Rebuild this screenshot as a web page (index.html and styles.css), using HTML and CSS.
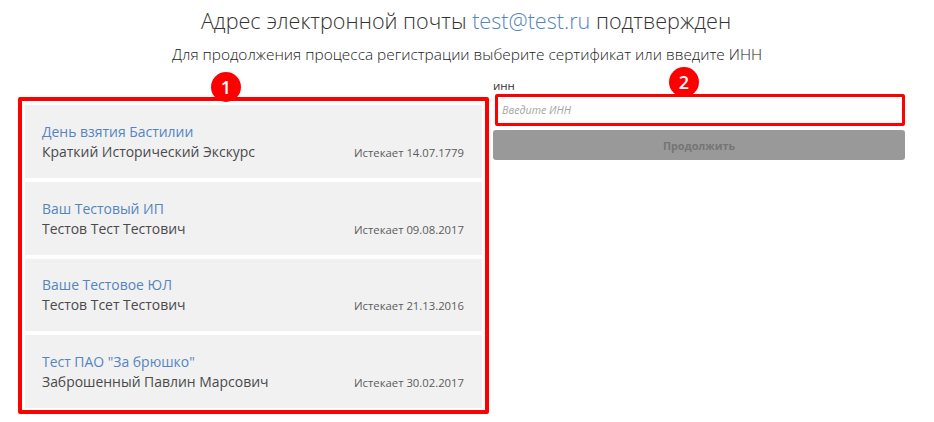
FILE: index.html
```html
<!DOCTYPE html>
<html lang="ru">

<head>
    <meta charset="UTF-8">
    <meta name="viewport" content="width=device-width, initial-scale=1.0">
    <title>Регистрация</title>
    <link rel="stylesheet" href="styles.css">
</head>

<body>
    <h1 class="title">Адрес электронной почты <a href="javascript:;" class="title_mail">test@test.ru</a> подтвержден</h1>
    <p class="subtitle">Для продолжения процесса регистрации выберите сертификат или введите ИНН</p>
    <div class="content">
        <div class="cert_box">
            <span class="badge badge_one">1</span>
            <div class="cert">
                <div class="cert_info">
                    <a href="javascript:;" class="cert_name">День взятия Бастилии</a>
                    <div class="cert_owner">Краткий Исторический Экскурс</div>
                </div>
                <div class="cert_date">Истекает 14.07.1779</div>
            </div>
            <div class="cert">
                <div class="cert_info">
                    <a href="javascript:;" class="cert_name">Ваш Тестовый ИП</a>
                    <div class="cert_owner">Тестов Тест Тестович</div>
                </div>
                <div class="cert_date">Истекает 09.08.2017</div>
            </div>
            <div class="cert">
                <div class="cert_info">
                    <a href="javascript:;" class="cert_name">Ваше Тестовое ЮЛ</a>
                    <div class="cert_owner">Тестов Тсет Тестович</div>
                </div>
                <div class="cert_date">Истекает 21.13.2016</div>
            </div>
            <div class="cert">
                <div class="cert_info">
                    <a href="javascript:;" class="cert_name">Тест ПАО "За брюшко"</a>
                    <div class="cert_owner">Заброшенный Павлин Марсович</div>
                </div>
                <div class="cert_date">Истекает 30.02.2017</div>
            </div>
        </div>
        <div class="inn_form">
            <span class="badge badge_two">2</span>
            <label for="inn" class="inn_label">инн</label>
            <input type="text" name="inn" id="inn" class="inn_input" placeholder="Введите ИНН">
            <button class="submit_btn">Продолжить</button>
        </div>
    </div>
</body>

</html>
```

FILE: styles.css
```css
* {
    margin: 0;
    padding: 0;
    box-sizing: border-box;
}

body {
    background-color: #fff;
    font-family: "Open Sans", "Noto Sans", sans-serif;
    color: #333;
}

a {
    text-decoration: none;
    color: #5585bd;
}

.title {
    height: 42px;
    padding-top: 6px;
    padding-right: 2px;
    font-size: 21.6px;
    line-height: 30px;
    font-weight: 300;
    text-align: center;
}

.subtitle {
    height: 34px;
    padding-top: 3px;
    font-size: 15.4px;
    line-height: 20px;
    font-weight: 300;
    color: #222;
    text-align: center;
}

.content {
    display: flex;
    align-items: flex-start;
    padding-left: 18px;
}

.cert_box {
    position: relative;
    display: flex;
    flex-direction: column;
    gap: 4px;
    width: 471px;
    height: 317px;
    margin-top: 21px;
    padding: 4px 3px 2px;
    border: 4px solid #f00;
    border-radius: 2px;
}

.cert {
    display: flex;
    justify-content: space-between;
    align-items: flex-end;
    height: 73px;
    padding: 0 18px 17px 17px;
    background-color: #f1f1f2;
}

.cert_name {
    display: block;
    font-size: 13.95px;
    line-height: 20px;
}

.cert_owner {
    font-size: 13.95px;
    line-height: 19px;
    color: #4a4a4a;
}

.cert_date {
    font-size: 11.3px;
    line-height: 16px;
    color: #5c5c5c;
}

.inn_form {
    position: relative;
    display: flex;
    flex-direction: column;
    width: 412px;
    margin-left: 4px;
    margin-top: 3px;
}

.inn_label {
    height: 15px;
    font-size: 11.5px;
    line-height: 13px;
}

.inn_input {
    width: 410px;
    height: 32px;
    margin-left: 2px;
    padding-left: 4px;
    border: 3px solid #f00;
    border-radius: 2px;
    outline: none;
    font-family: "Open Sans", "Noto Sans", sans-serif;
    font-size: 10.7px;
    font-style: italic;
}

.inn_input::placeholder {
    color: #a5a5a5;
}

.submit_btn {
    height: 30px;
    margin-top: 4px;
    border: none;
    border-radius: 3px;
    background-color: #999;
    font-family: "Open Sans", "Noto Sans", sans-serif;
    font-size: 10.8px;
    font-weight: 700;
    color: #757575;
}

.badge {
    position: absolute;
    display: block;
    width: 30px;
    height: 30px;
    border-radius: 50%;
    background-color: #f00;
    font-size: 18px;
    font-weight: 600;
    line-height: 30px;
    text-align: center;
    color: #fff;
}

.badge_one {
    top: -29px;
    left: 189px;
}

.badge_two {
    top: -12px;
    left: 176px;
}
```
